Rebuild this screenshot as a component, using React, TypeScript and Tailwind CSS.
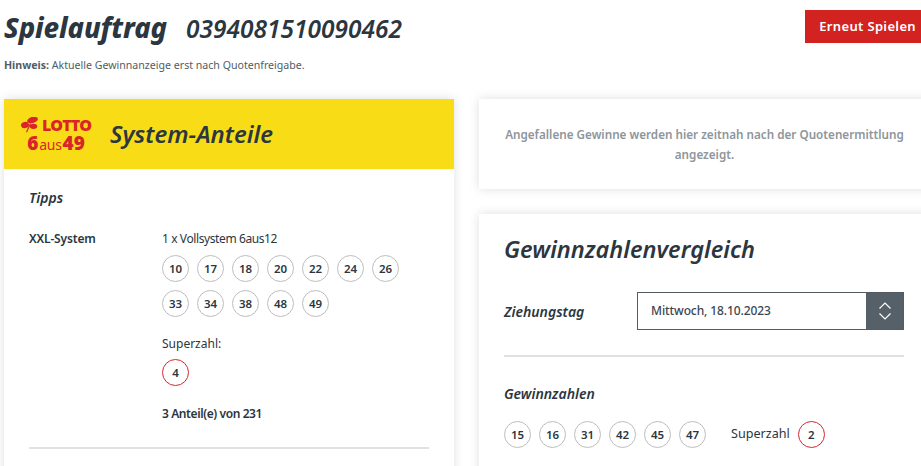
const systemRows = [
    ["10", "17", "18", "20", "22", "24", "26"],
    ["33", "34", "38", "48", "49"],
];
const drawnNumbers = ["15", "16", "31", "42", "45", "47"];

function Ball({ value, red = false }: { value: string; red?: boolean }) {
    return (
        <span
            className={`flex h-[27px] w-[27px] shrink-0 items-center justify-center rounded-full border text-[11.500px] font-semibold tracking-[-0.1px] text-[#2b3640] ${red ? "border-[#d9252a]" : "border-[#bdbdbd]"}`}
        >
            {value}
        </span>
    );
}

function LottoLogo() {
    return (
        <div className="flex w-[70px] flex-col items-center pt-[2px] text-[#d9252a]">
            <div className="flex h-[16px] items-center gap-[4px]">
                <svg width="17" height="16" viewBox="0 0 17 16" fill="#d9252a">
                    <ellipse cx="11.500" cy="3" rx="5.500" ry="3" transform="rotate(-15 11.500 3)" />
                    <ellipse cx="4" cy="8" rx="4" ry="3.200" transform="rotate(-15 4 8)" />
                    <ellipse cx="12.500" cy="9.300" rx="3.700" ry="2.600" />
                    <path d="M9 6 10 7 6 15.500 5 15z" />
                </svg>
                <span className="text-[16px] font-black leading-none tracking-[-0.9px] font-['Open_Sans',sans-serif]">LOTTO</span>
            </div>
            <div className="flex h-[20px] items-baseline leading-[20px]">
                <span className="text-[19px] font-black">6</span>
                <span className="mx-[1px] text-[14px] tracking-[-0.3px]">aus</span>
                <span className="text-[19px] font-black">49</span>
            </div>
        </div>
    );
}

function Chevrons() {
    return (
        <svg width="12" height="18" viewBox="0 0 12 18" fill="none" stroke="#ffffff" strokeWidth="1.2">
            <path d="M.500 6.500 6 1 11.500 6.500" />
            <path d="M.500 11.500 6 17 11.500 11.500" />
        </svg>
    );
}

export default function App() {
    return (
        <div className="h-[466px] w-[921px] overflow-hidden bg-white font-['Noto_Sans',sans-serif] text-[#2b3640]">
            <div className="w-[930px] pl-1">
                <div className="flex items-start justify-between pt-[10px]">
                    <h1 className="flex items-baseline italic leading-[36px]">
                        <span className="text-[27.500px] font-extrabold tracking-[-0.1px]">Spielauftrag</span>
                        <span className="ml-[19px] text-[24.500px] font-semibold">0394081510090462</span>
                    </h1>
                    <button className="h-[33px] bg-[#d32320] px-[14px] text-[13px] font-semibold tracking-[0.35px] text-white">
                        Erneut Spielen
                    </button>
                </div>
                <p className="mt-[10px] text-[10.600px] leading-[16px] text-[#525c65]">
                    <b>Hinweis:</b> Aktuelle Gewinnanzeige erst nach Quotenfreigabe.
                </p>

                <div className="mt-[26px] grid grid-cols-[450px_451px] gap-[25px]">
                    <section className="h-[400px] bg-white shadow-[0_0_10px_rgba(0,0,0,0.13)]">
                        <div className="flex h-[70px] items-center bg-[#f8dc15] pl-[17px]">
                            <LottoLogo />
                            <h2 className="ml-[19px] text-[23.900px] font-semibold italic">System-Anteile</h2>
                        </div>
                        <div className="px-[25px]">
                            <h3 className="mt-[19px] text-[14px] font-semibold italic leading-[20px]">Tipps</h3>
                            <div className="mt-[22px] flex">
                                <div className="w-[133px] text-[12px] font-semibold leading-[18px] tracking-[-0.15px]">XXL-System</div>
                                <div>
                                    <p className="text-[12px] leading-[18px] tracking-[-0.4px]">1 x Vollsystem 6aus12</p>
                                    <div className="mt-[7px] flex flex-col gap-2">
                                        {systemRows.map((row) => (
                                            <div key={row[0]} className="flex gap-2">
                                                {row.map((n) => (
                                                    <Ball key={n} value={n} />
                                                ))}
                                            </div>
                                        ))}
                                    </div>
                                    <p className="mt-[18px] text-[12px] leading-[18px]">Superzahl:</p>
                                    <div className="mt-[6px]">
                                        <Ball value="4" red />
                                    </div>
                                    <p className="mt-[19px] text-[12px] font-semibold leading-[18px] tracking-[-0.4px]">3 Anteil(e) von 231</p>
                                </div>
                            </div>
                            <div className="mt-[24px] h-[2px] bg-[#e1e1e1]" />
                        </div>
                    </section>

                    <div className="flex flex-col gap-[25px]">
                        <section className="flex h-[90px] items-center justify-center bg-white px-[20px] text-center shadow-[0_0_10px_rgba(0,0,0,0.13)]">
                            <p className="text-[11.700px] font-semibold leading-[20px] text-[#8e959b]">
                                Angefallene Gewinne werden hier zeitnah nach der Quotenermittlung angezeigt.
                            </p>
                        </section>
                        <section className="h-[300px] bg-white pl-[25px] pr-[26px] shadow-[0_0_10px_rgba(0,0,0,0.13)]">
                            <h2 className="mt-[19px] text-[23.500px] font-semibold italic leading-[32px]">Gewinnzahlenvergleich</h2>
                            <div className="mt-[27px] flex items-center">
                                <span className="w-[133px] text-[14px] font-semibold italic">Ziehungstag</span>
                                <div className="flex h-[38px] flex-1 border border-[#525c65]">
                                    <span className="flex flex-1 items-center pl-[13px] text-[12px] font-medium tracking-[-0.1px] text-[#3c464e]">
                                        Mittwoch, 18.10.2023
                                    </span>
                                    <span className="flex w-[37px] items-center justify-center bg-[#566068]">
                                        <Chevrons />
                                    </span>
                                </div>
                            </div>
                            <div className="mt-[25px] h-[2px] bg-[#e1e1e1]" />
                            <h3 className="mt-[27px] text-[14px] font-semibold italic leading-[20px]">Gewinnzahlen</h3>
                            <div className="mt-[17px] flex items-center">
                                <div className="flex gap-2">
                                    {drawnNumbers.map((n) => (
                                        <Ball key={n} value={n} />
                                    ))}
                                </div>
                                <span className="ml-[25px] mr-[8px] text-[12.600px]">Superzahl</span>
                                <Ball value="2" red />
                            </div>
                        </section>
                    </div>
                </div>
            </div>
        </div>
    );
}
